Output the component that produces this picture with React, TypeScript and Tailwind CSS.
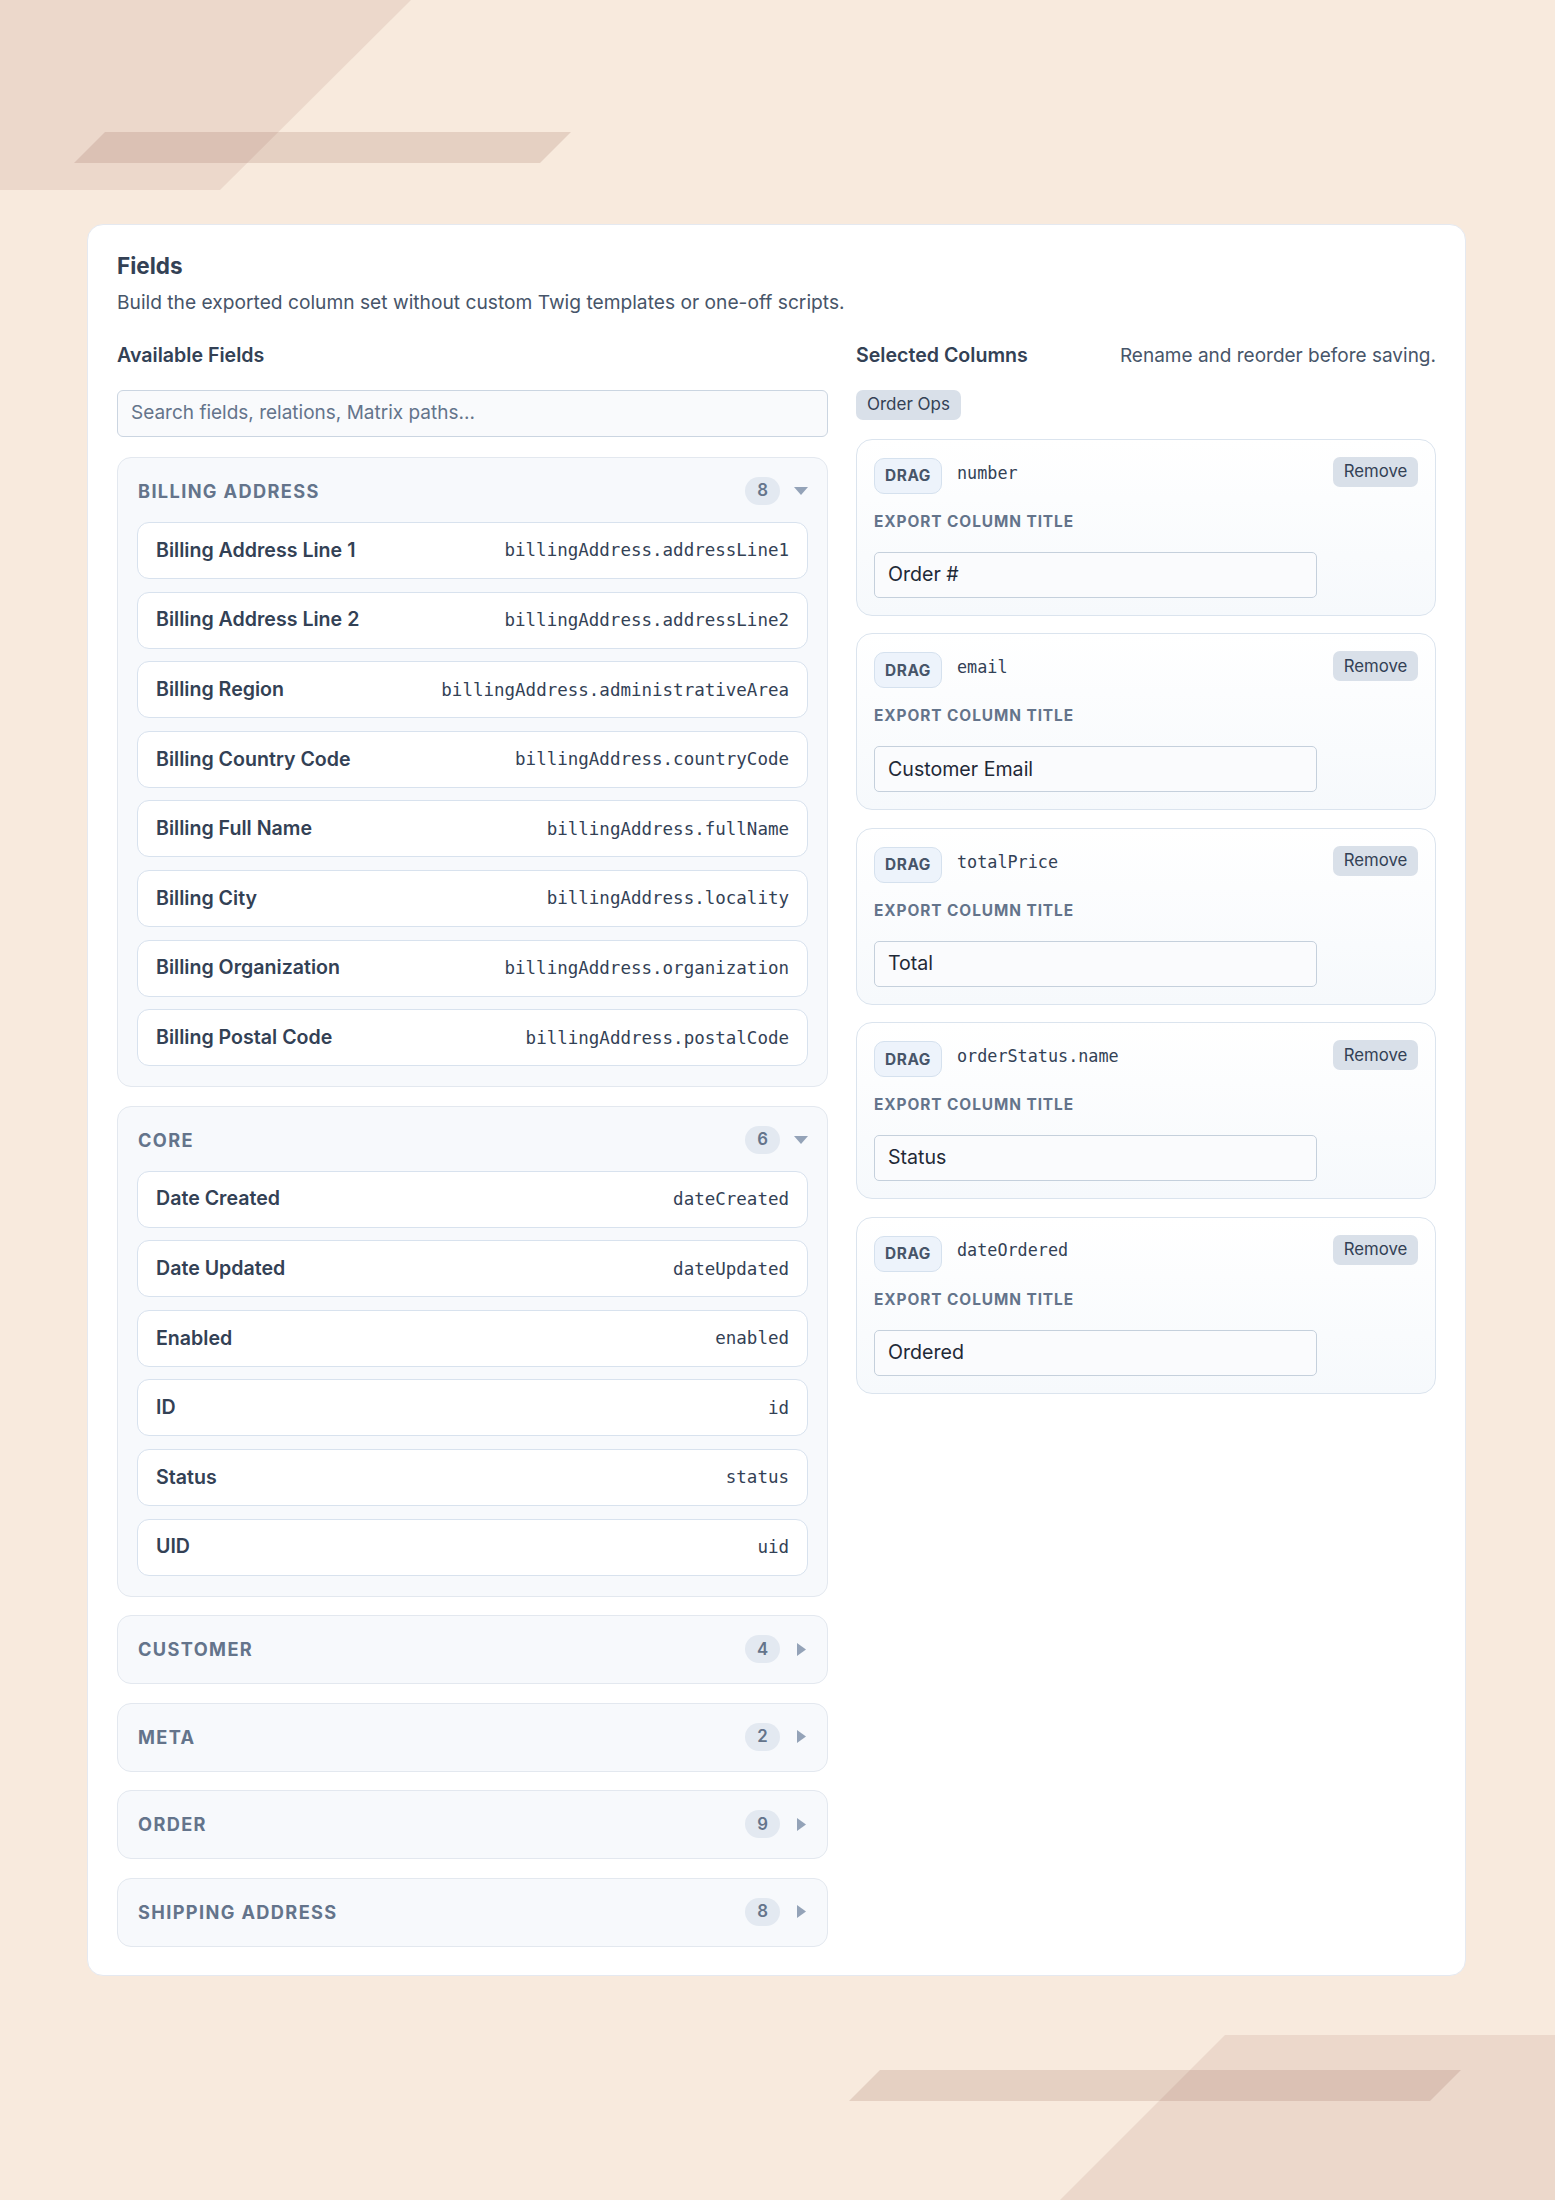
import React from "react";

type Field = { label: string; path: string };
type Group = { name: string; count: number; open: boolean; fields: Field[] };

const groups: Group[] = [
  {
    name: "Billing Address",
    count: 8,
    open: true,
    fields: [
      { label: "Billing Address Line 1", path: "billingAddress.addressLine1" },
      { label: "Billing Address Line 2", path: "billingAddress.addressLine2" },
      { label: "Billing Region", path: "billingAddress.administrativeArea" },
      { label: "Billing Country Code", path: "billingAddress.countryCode" },
      { label: "Billing Full Name", path: "billingAddress.fullName" },
      { label: "Billing City", path: "billingAddress.locality" },
      { label: "Billing Organization", path: "billingAddress.organization" },
      { label: "Billing Postal Code", path: "billingAddress.postalCode" },
    ],
  },
  {
    name: "Core",
    count: 6,
    open: true,
    fields: [
      { label: "Date Created", path: "dateCreated" },
      { label: "Date Updated", path: "dateUpdated" },
      { label: "Enabled", path: "enabled" },
      { label: "ID", path: "id" },
      { label: "Status", path: "status" },
      { label: "UID", path: "uid" },
    ],
  },
  { name: "Customer", count: 4, open: false, fields: [] },
  { name: "Meta", count: 2, open: false, fields: [] },
  { name: "Order", count: 9, open: false, fields: [] },
  { name: "Shipping Address", count: 8, open: false, fields: [] },
];

const columns = [
  { handle: "number", title: "Order #" },
  { handle: "email", title: "Customer Email" },
  { handle: "totalPrice", title: "Total" },
  { handle: "orderStatus.name", title: "Status" },
  { handle: "dateOrdered", title: "Ordered" },
];

const sans = "font-['Inter','Liberation_Sans',sans-serif]";
const mono = "font-['DejaVu_Sans_Mono','Liberation_Mono',monospace]";

function Caret({ open }: { open: boolean }) {
  return (
    <span className="flex w-[14px] justify-center">
      {open ? (
        <svg width="14" height="8" viewBox="0 0 14 8">
          <path d="M0 0 H14 L7 8 Z" fill="#94a3b8" />
        </svg>
      ) : (
        <svg width="9" height="13" viewBox="0 0 9 13">
          <path d="M0 0 L9 6.5 L0 13 Z" fill="#94a3b8" />
        </svg>
      )}
    </span>
  );
}

function FieldGroup({ group }: { group: Group }) {
  return (
    <div className="rounded-[14px] border border-[#e3e8ef] bg-[#f7f9fc] px-[19px] pt-[19px] pb-[20px]">
      <div className="flex h-[28px] items-center justify-between pl-[1px]">
        <span className="text-[18.2px] leading-[24px] font-bold uppercase tracking-[0.075em] text-[#64748b]">
          {group.name}
        </span>
        <div className="flex items-center gap-[14px]">
          <span className="flex h-[28px] w-[35px] items-center justify-center rounded-full bg-[#e3e9f1] text-[16.8px] font-semibold text-[#64748b]">
            {group.count}
          </span>
          <Caret open={group.open} />
        </div>
      </div>
      {group.open && (
        <div className="mt-[17px] flex flex-col gap-[12.6px]">
          {group.fields.map((f) => (
            <div
              key={f.path}
              className="flex h-[57px] items-center justify-between rounded-[12px] border border-[#d8e2ee] bg-white px-[18px]"
            >
              <span className="text-[19.6px] font-semibold text-[#334155]">{f.label}</span>
              <span className={`${mono} text-[17.5px] text-[#334155]`}>{f.path}</span>
            </div>
          ))}
        </div>
      )}
    </div>
  );
}

function ColumnCard({ handle, title }: { handle: string; title: string }) {
  return (
    <div className="rounded-[16px] border border-[#dbe4ee] bg-gradient-to-b from-white to-[#f6f9fc] p-[17px]">
      <div className="flex h-[37px] items-start justify-between">
        <div className="flex items-center gap-[15px] pt-[1px]">
          <span className="flex h-[36px] w-[68px] items-center justify-center rounded-[10px] border border-[#d5e1ee] bg-[#edf3fb] text-[15.4px] font-bold tracking-[0.04em] text-[#475569]">
            DRAG
          </span>
          <span className={`${mono} -mt-[5px] text-[16.8px] text-[#334155]`}>{handle}</span>
        </div>
        <button className="h-[30px] w-[85px] rounded-[7px] bg-[#d9e0e9] text-[16.8px] text-[#334155]">
          Remove
        </button>
      </div>
      <div className="mt-[18px] text-[15.4px] leading-[20px] font-bold uppercase tracking-[0.06em] text-[#64748b]">
        Export column title
      </div>
      <div className="mt-[20px] flex h-[46px] w-[443px] items-center rounded-[5px] border border-[#c5d0dc] bg-[#fafbfd] px-[13px] text-[19.6px] text-[#1f2937]">
        {title}
      </div>
    </div>
  );
}

export default function App() {
  return (
    <div className={`${sans} relative min-h-[2200px] w-full overflow-hidden bg-[#f8eadd]`}>
      {/* decorative slabs in the corners */}
      <svg
        className="absolute left-0 top-0"
        width="1555"
        height="2200"
        viewBox="0 0 1555 2200"
      >
        <g fill="#9c6b5a">
          <polygon points="0,0 411,0 220,190 0,190" fillOpacity="0.135" />
          <polygon points="105,132 571,132 540,163 74,163" fillOpacity="0.2" />
          <polygon points="1225,2035 1555,2035 1555,2200 1060,2200" fillOpacity="0.135" />
          <polygon points="880,2070 1461,2070 1430,2101 849,2101" fillOpacity="0.2" />
        </g>
      </svg>

      <div className="relative pl-[87px] pt-[224px]">
        <div className="w-[1379px] rounded-[16px] border border-[#e5e9f0] bg-white px-[29px] pt-[29px] pb-[28px]">
          <h2 className="text-[22.5px] leading-[24px] font-bold text-[#334155]">Fields</h2>
          <p className="mt-[10px] text-[19.2px] leading-[28px] text-[#475569]">
            Build the exported column set without custom Twig templates or one-off scripts.
          </p>

          <div className="mt-[26px] flex items-start gap-[28px]">
            {/* available fields */}
            <div className="flex w-[711px] flex-col">
              <div className="flex h-[28px] items-center text-[19.6px] font-semibold text-[#334155]">
                Available Fields
              </div>
              <div className="mt-[20px] flex h-[47px] items-center rounded-[6px] border border-[#cbd5e1] bg-[#f9fafc] px-[13px] text-[19px] text-[#64748b]">
                Search fields, relations, Matrix paths...
              </div>
              <div className="mt-[20px] flex flex-col gap-[18.5px]">
                {groups.map((g) => (
                  <FieldGroup key={g.name} group={g} />
                ))}
              </div>
            </div>

            {/* selected columns */}
            <div className="flex flex-1 flex-col">
              <div className="flex h-[28px] items-center justify-between">
                <span className="text-[19.6px] font-semibold text-[#334155]">Selected Columns</span>
                <span className="text-[19px] text-[#475569]">Rename and reorder before saving.</span>
              </div>
              <div className="mt-[20px] flex">
                <span className="flex h-[30px] items-center rounded-[7px] bg-[#d9e0e9] px-[11px] text-[17px] text-[#334155]">
                  Order Ops
                </span>
              </div>
              <div className="mt-[19px] flex flex-col gap-[17.4px]">
                {columns.map((c) => (
                  <ColumnCard key={c.handle} handle={c.handle} title={c.title} />
                ))}
              </div>
            </div>
          </div>
        </div>
      </div>
    </div>
  );
}
